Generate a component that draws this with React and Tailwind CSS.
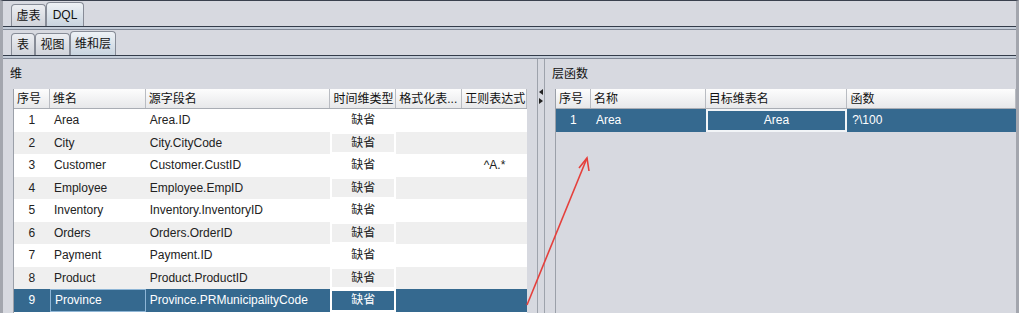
import React from "react";

const FONT = "font-['Liberation_Sans','Noto_Sans_CJK_SC',sans-serif]";

const dims = [
  ["Area", "Area.ID", ""],
  ["City", "City.CityCode", ""],
  ["Customer", "Customer.CustID", "^A.*"],
  ["Employee", "Employee.EmpID", ""],
  ["Inventory", "Inventory.InventoryID", ""],
  ["Orders", "Orders.OrderID", ""],
  ["Payment", "Payment.ID", ""],
  ["Product", "Product.ProductID", ""],
  ["Province", "Province.PRMunicipalityCode", ""],
];

function Tab({ label, active, w }) {
  return (
    <div
      className={`${w} flex items-center justify-center rounded-t-[4px] border border-b-0 border-[#878c97] text-[12px] text-[#111] ${
        active
          ? "h-[24px] bg-gradient-to-b from-[#eef2f6] to-[#c9d4df]"
          : "h-[22px] bg-gradient-to-b from-[#eceef2] to-[#d0d3da]"
      }`}
    >
      {label}
    </div>
  );
}

function TabLine() {
  return (
    <div>
      <div className="h-px bg-[#333c4a]" />
      <div className="h-[2px] bg-[#c3ccd8]" />
      <div className="h-px bg-[#7f8795]" />
    </div>
  );
}

function HeaderCell({ children, w }) {
  return (
    <div
      className={`${w} h-full flex items-center pl-[3px] border-r border-[#b9bcc2] bg-gradient-to-b from-[#fdfdfd] to-[#e7e8ea] whitespace-nowrap overflow-hidden text-[#111]`}
    >
      {children}
    </div>
  );
}

function DimTable() {
  return (
    <div className="w-[514px] h-full bg-white border-l border-[#9ba0a9] overflow-hidden">
      <div className="flex h-[20px] border-b border-[#a9adb4]">
        <HeaderCell w="w-[36px]">序号</HeaderCell>
        <HeaderCell w="w-[96px]">维名</HeaderCell>
        <HeaderCell w="w-[185px]">源字段名</HeaderCell>
        <HeaderCell w="w-[66px]">时间维类型</HeaderCell>
        <HeaderCell w="w-[66px]">格式化表...</HeaderCell>
        <HeaderCell w="w-[65px]">正则表达式</HeaderCell>
      </div>
      {dims.map(([name, src, regex], i) => {
        const sel = i === 8;
        const bg = sel ? "bg-[#35698f]" : i % 2 ? "bg-[#efefef]" : "bg-white";
        const txt = sel ? "text-white" : "text-[#222]";
        return (
          <div key={i} className={`flex h-[22.5px] ${bg} ${txt}`}>
            <div className="w-[36px] flex items-center justify-center">{i + 1}</div>
            <div
              className={`w-[96px] flex items-center pl-[4px] ${
                sel ? "border border-[#8fb6d6]" : ""
              }`}
            >
              {name}
            </div>
            <div className="w-[185px] flex items-center pl-[4px]">{src}</div>
            <div className="w-[66px] bg-white p-[2px]">
              <div className={`h-full flex items-center justify-center ${bg}`}>缺省</div>
            </div>
            <div className="w-[66px]" />
            <div className="w-[65px] flex items-center justify-center">{regex}</div>
          </div>
        );
      })}
    </div>
  );
}

function FuncTable() {
  return (
    <div className="w-[461px] h-full border-l border-[#9ba0a9] overflow-hidden">
      <div className="flex h-[20px] border-b border-[#a9adb4]">
        <HeaderCell w="w-[35px]">序号</HeaderCell>
        <HeaderCell w="w-[115px]">名称</HeaderCell>
        <HeaderCell w="w-[142px]">目标维表名</HeaderCell>
        <HeaderCell w="w-[169px]">函数</HeaderCell>
      </div>
      <div className="flex h-[22.5px] bg-[#35698f] text-white">
        <div className="w-[35px] flex items-center justify-center">1</div>
        <div className="w-[115px] flex items-center pl-[5px]">Area</div>
        <div className="w-[142px] border-2 border-[#f2f5f8] flex items-center justify-center">
          Area
        </div>
        <div className="w-[169px] flex items-center pl-[5px]">?\100</div>
      </div>
    </div>
  );
}

export default function App() {
  return (
    <div
      className={`relative w-[1019px] h-[313px] overflow-hidden bg-[#d7d9e0] border-t border-[#3a414e] border-x-[3px] border-x-[#a3a6ae] text-[12px] ${FONT}`}
    >
      {/* outer tabs */}
      <div className="h-[25px] flex items-end pl-[8px]">
        <Tab label="虚表" w="w-[35px]" />
        <Tab label="DQL" w="w-[38px]" active />
      </div>
      <TabLine />

      {/* inner tabs */}
      <div className="h-[25px] flex items-end pl-[8px]">
        <Tab label="表" w="w-[24px]" />
        <Tab label="视图" w="w-[35px]" />
        <Tab label="维和层" w="w-[46px]" active />
      </div>
      <TabLine />

      {/* content */}
      <div className="flex h-[255px]">
        <div className="w-[534px] flex flex-col">
          <div className="h-[30px] flex items-center pl-[7px] text-[#111]">维</div>
          <div className="flex-1 pl-[10px] overflow-hidden">
            <DimTable />
          </div>
        </div>

        {/* splitter */}
        <div className="w-[8px] border-x border-[#9ea3ac] flex flex-col items-center pt-[30px] gap-[3px]">
          <svg width="4" height="6" viewBox="0 0 4 6">
            <path d="M4 0 L0 3 L4 6 Z" fill="#222" />
          </svg>
          <svg width="4" height="6" viewBox="0 0 4 6">
            <path d="M0 0 L4 3 L0 6 Z" fill="#222" />
          </svg>
        </div>

        <div className="flex-1 flex flex-col">
          <div className="h-[30px] flex items-center pl-[7px] text-[#111]">层函数</div>
          <div className="flex-1 pl-[10px] overflow-hidden">
            <FuncTable />
          </div>
        </div>
      </div>

      {/* annotation arrow */}
      <svg
        className="absolute left-0 top-0 pointer-events-none"
        width="1019"
        height="313"
        viewBox="0 0 1019 313"
      >
        <line x1="524" y1="304" x2="584" y2="157" stroke="#e5403c" strokeWidth="1.6" />
        <path d="M576 167 L584 157 L586 170" fill="none" stroke="#e5403c" strokeWidth="1.6" />
      </svg>
    </div>
  );
}
